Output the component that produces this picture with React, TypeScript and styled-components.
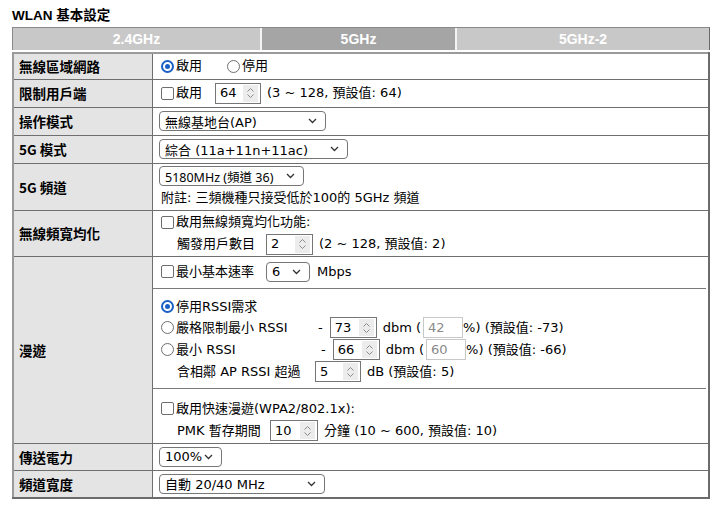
import React from "react";
import styled, { createGlobalStyle } from "styled-components";

const GlobalStyle = createGlobalStyle`
  html, body {
    margin: 0;
    padding: 0;
    background: #ffffff;
  }
  body {
    font-family: "DejaVu Sans", "Noto Sans CJK TC", sans-serif;
    font-size: 13px;
    color: #000;
  }
`;

const Page = styled.div`
  padding: 8px 9px 0 12px;
  width: 698px;
`;

const Title = styled.div`
  font-family: "Liberation Sans", "Noto Sans CJK TC", sans-serif;
  font-weight: bold;
  font-size: 13.5px;
  line-height: 16px;
  height: 19px;
`;

const TabBar = styled.div`
  display: flex;
  height: 22px;
  border: 1px solid #8a8a8a;
  border-bottom: none;
  border-right-color: #6a6a6a;
  background: #fff;
  margin-bottom: 2px;
`;

const Tab = styled.div<{ $active?: boolean; $w: number }>`
  width: ${(p) => p.$w}px;
  display: flex;
  align-items: center;
  justify-content: center;
  background: ${(p) => (p.$active ? "#a5a5a5" : "#c8c8c8")};
  color: #fff;
  font-family: "Liberation Sans", Arial, sans-serif;
  font-weight: bold;
  font-size: 14px;
  border-right: 2px solid #f4f4f4;
  &:last-child {
    border-right: none;
  }
`;

const Table = styled.table`
  width: 698px;
  border-collapse: collapse;
  border-top: 2px solid #9a9a9a;
  border-left: 2px solid #9a9a9a;
  border-right: 2px solid #6b6b6b;
  border-bottom: 2px solid #6b6b6b;
`;

const Row = styled.tr<{ $h: number }>`
  height: ${(p) => p.$h}px;
`;

const Label = styled.td`
  width: 133px;
  background: #e4e4e4;
  border: 1px solid #6f6f6f;
  padding: 0 0 0 5px;
  font-family: "Noto Sans CJK TC", sans-serif;
  font-weight: bold;
  font-size: 13.5px;
  vertical-align: middle;
`;

const Cell = styled.td<{ $pad?: boolean }>`
  border: 1px solid #6f6f6f;
  padding: ${(p) => (p.$pad === false ? "0" : "0 0 0 6px")};
  vertical-align: middle;
`;

const Line = styled.div<{ $indent?: number; $h?: number }>`
  display: flex;
  align-items: center;
  height: ${(p) => p.$h ?? 22}px;
  padding-left: ${(p) => p.$indent ?? 0}px;
  white-space: nowrap;
  line-height: 16px;
`;

const Gap = styled.span<{ $w: number }>`
  display: inline-block;
  flex: none;
  width: ${(p) => p.$w}px;
`;

const FixedText = styled.span<{ $w: number }>`
  display: inline-block;
  flex: none;
  width: ${(p) => p.$w}px;
`;

const Section = styled.div<{ $h: number; $top?: number; $last?: boolean }>`
  height: ${(p) => p.$h}px;
  box-sizing: border-box;
  padding: ${(p) => p.$top ?? 0}px 0 0 8px;
  margin-right: 2px;
  border-bottom: ${(p) => (p.$last ? "none" : "1px solid #7a7a7a")};
`;

const RadioDot = styled.span<{ $on?: boolean }>`
  width: 13px;
  height: 13px;
  box-sizing: border-box;
  border-radius: 50%;
  border: ${(p) => (p.$on ? "2px solid #1a5fc4" : "1px solid #6e6e6e")};
  display: inline-flex;
  align-items: center;
  justify-content: center;
  margin-right: 2px;
  flex: none;
  &::after {
    content: "";
    width: 5px;
    height: 5px;
    border-radius: 50%;
    background: ${(p) => (p.$on ? "#1a5fc4" : "transparent")};
  }
`;

const CheckBox = styled.span`
  width: 13px;
  height: 13px;
  box-sizing: border-box;
  border: 1px solid #6e6e6e;
  border-radius: 2px;
  display: inline-block;
  margin-right: 2px;
  flex: none;
`;

const Box = styled.span<{ $w: number; $disabled?: boolean }>`
  display: inline-flex;
  align-items: center;
  width: ${(p) => p.$w}px;
  height: 21px;
  box-sizing: border-box;
  border: 1px solid ${(p) => (p.$disabled ? "#c8c8c8" : "#767676")};
  color: ${(p) => (p.$disabled ? "#8a8a8a" : "#000")};
  padding-left: 4px;
  background: #fff;
  flex: none;
`;

const Spin = styled.span`
  margin-left: auto;
  width: 15px;
  height: 17px;
  margin-right: 2px;
  background: #ececec;
  display: flex;
  align-items: center;
  justify-content: center;
`;

const SelectBox = styled.span<{ $w: number; $narrow?: boolean }>`
  display: inline-flex;
  align-items: center;
  width: ${(p) => p.$w}px;
  height: 20px;
  box-sizing: border-box;
  border: 1px solid #767676;
  border-radius: 4px;
  padding: 0 8px 0 5px;
  background: #fff;
  flex: none;
  justify-content: space-between;
  white-space: nowrap;
  font-family: ${(p) =>
    p.$narrow ? '"Noto Sans", "Noto Sans CJK TC", sans-serif' : "inherit"};
  font-size: ${(p) => (p.$narrow ? "12.5px" : "13px")};
`;

const Note = styled.div`
  height: 21px;
  display: flex;
  align-items: center;
  white-space: nowrap;
`;

function Radio({ on, children }: { on?: boolean; children: React.ReactNode }) {
  return (
    <>
      <RadioDot $on={on} />
      {children}
    </>
  );
}

function Check({ children }: { children: React.ReactNode }) {
  return (
    <>
      <CheckBox />
      {children}
    </>
  );
}

function Num({ w, value }: { w: number; value: string }) {
  return (
    <Box $w={w}>
      {value}
      <Spin>
        <svg width="9" height="12" viewBox="0 0 9 12">
          <path d="M1.5 4.5 L4.5 1.5 L7.5 4.5 M1.5 7.5 L4.5 10.5 L7.5 7.5" fill="none" stroke="#8a8a8a" strokeWidth="1" />
        </svg>
      </Spin>
    </Box>
  );
}

function Select({ w, value, narrow }: { w: number; value: string; narrow?: boolean }) {
  return (
    <SelectBox $w={w} $narrow={narrow}>
      <span>{value}</span>
      <svg width="9" height="6" viewBox="0 0 9 6">
        <path d="M1 1 L4.5 4.5 L8 1" fill="none" stroke="#333" strokeWidth="1.3" />
      </svg>
    </SelectBox>
  );
}

export default function App() {
  return (
    <Page>
      <GlobalStyle />
      <Title>WLAN 基本設定</Title>
      <TabBar>
        <Tab $w={247}>2.4GHz</Tab>
        <Tab $w={193} $active>
          5GHz
        </Tab>
        <Tab $w={252}>5GHz-2</Tab>
      </TabBar>
      <Table>
        <tbody>
          <Row $h={26}>
            <Label>無線區域網路</Label>
            <Cell>
              <Line>
                <Gap $w={2} />
                <Radio on>啟用</Radio>
                <Gap $w={25} />
                <Radio>停用</Radio>
              </Line>
            </Cell>
          </Row>
          <Row $h={28}>
            <Label>限制用戶端</Label>
            <Cell>
              <Line>
                <Gap $w={2} />
                <Check>啟用</Check>
                <Gap $w={13} />
                <Num w={46} value="64" />
                <Gap $w={6} />
                (3 ~ 128, 預設值: 64)
              </Line>
            </Cell>
          </Row>
          <Row $h={28}>
            <Label>操作模式</Label>
            <Cell>
              <Select w={167} value="無線基地台(AP)" />
            </Cell>
          </Row>
          <Row $h={28}>
            <Label>5G 模式</Label>
            <Cell>
              <Select w={189} value="綜合 (11a+11n+11ac)" />
            </Cell>
          </Row>
          <Row $h={47}>
            <Label>5G 頻道</Label>
            <Cell>
              <Select w={145} value="5180MHz (頻道 36)" narrow />
              <Note>
                <Gap $w={2} />
                附註: 三頻機種只接受低於100的 5GHz 頻道
              </Note>
            </Cell>
          </Row>
          <Row $h={46}>
            <Label>無線頻寬均化</Label>
            <Cell>
              <Line>
                <Gap $w={2} />
                <Check>啟用無線頻寬均化功能:</Check>
              </Line>
              <Line $indent={18}>
                觸發用戶數目
                <Gap $w={11} />
                <Num w={47} value="2" />
                <Gap $w={6} />
                (2 ~ 128, 預設值: 2)
              </Line>
            </Cell>
          </Row>
          <Row $h={187}>
            <Label>漫遊</Label>
            <Cell $pad={false}>
              <Section $h={32} $top={4}>
                <Line>
                  <Check>最小基本速率</Check>
                  <Gap $w={12} />
                  <Select w={44} value="6" />
                  <Gap $w={7} />
                  Mbps
                </Line>
              </Section>
              <Section $h={100} $top={8}>
                <Line $h={20}>
                  <Radio on>停用RSSI需求</Radio>
                </Line>
                <Line $h={22}>
                  <RadioDot />
                  <FixedText $w={142}>嚴格限制最小 RSSI</FixedText>-<Gap $w={7} />
                  <Num w={47} value="73" />
                  <Gap $w={6} />
                  dbm (
                  <Gap $w={2} />
                  <Box $w={40} $disabled>
                    42
                  </Box>
                  %) (預設值: -73)
                </Line>
                <Line $h={22}>
                  <RadioDot />
                  <FixedText $w={145}>最小 RSSI</FixedText>-<Gap $w={7} />
                  <Num w={47} value="66" />
                  <Gap $w={6} />
                  dbm (
                  <Gap $w={2} />
                  <Box $w={40} $disabled>
                    60
                  </Box>
                  %) (預設值: -66)
                </Line>
                <Line $h={22} $indent={16}>
                  <FixedText $w={138}>含相鄰 AP RSSI 超過</FixedText>
                  <Num w={46} value="5" />
                  <Gap $w={6} />
                  dB (預設值: 5)
                </Line>
              </Section>
              <Section $h={54} $top={9} $last>
                <Line>
                  <Check>啟用快速漫遊(WPA2/802.1x):</Check>
                </Line>
                <Line $indent={16}>
                  <FixedText $w={93}>PMK 暫存期間</FixedText>
                  <Num w={48} value="10" />
                  <Gap $w={6} />
                  分鐘 (10 ~ 600, 預設值: 10)
                </Line>
              </Section>
            </Cell>
          </Row>
          <Row $h={27}>
            <Label>傳送電力</Label>
            <Cell>
              <Select w={63} value="100%" />
            </Cell>
          </Row>
          <Row $h={28}>
            <Label>頻道寬度</Label>
            <Cell>
              <Select w={166} value="自動 20/40 MHz" />
            </Cell>
          </Row>
        </tbody>
      </Table>
    </Page>
  );
}
